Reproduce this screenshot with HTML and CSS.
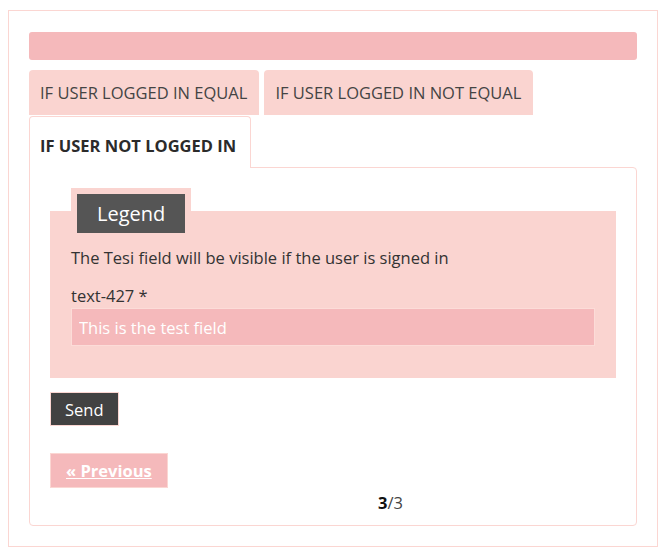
FILE: index.html
```html
<!DOCTYPE html>
<html lang="en">
<head>
    <meta charset="UTF-8">
    <meta name="viewport" content="width=device-width, initial-scale=1.0">
    <title>Multi step form</title>
    <link rel="stylesheet" href="styles.css">
</head>
<body>
    <div class="form-wrap">
        <!-- progress bar -->
        <div class="progress"></div>

        <!-- steps -->
        <ul class="tabs">
            <li class="tab">IF USER LOGGED IN EQUAL</li>
            <li class="tab">IF USER LOGGED IN NOT EQUAL</li>
            <li class="tab active">IF USER NOT LOGGED IN</li>
        </ul>

        <div class="panel">
            <fieldset class="group">
                <legend><span>Legend</span></legend>
                <p>The Tesi field will be visible if the user is signed in</p>
                <label for="text-427">text-427 *</label>
                <input type="text" id="text-427" placeholder="This is the test field">
            </fieldset>

            <button class="send" type="button">Send</button>

            <div class="pager">
                <a href="#" class="prev">&laquo; Previous</a>
            </div>
            <div class="count"><b>3</b>/3</div>
        </div>
    </div>
</body>
</html>
```

FILE: styles.css
```css
body {
    margin: 10px 0 0 8px;
    font-family: "Open Sans", "Noto Sans", sans-serif;
    font-size: 16.5px;
    color: #333;
    background: #fff;
}
.form-wrap {
    width: 650px;
    box-sizing: border-box;
    border: 1px solid #fbd6d2;
    padding: 21px 20px 20px;
}
.progress {
    height: 28px;
    background-color: #f5b9bb;
    border-radius: 3px;
}
/* steps */
.tabs {
    list-style: none;
    margin: 10px 0 0;
    padding: 0;
    display: flex;
    flex-wrap: wrap;
    column-gap: 5px;
    row-gap: 1px;
}
.tab {
    background-color: #fad4d0;
    color: #444;
    padding: 12px 12px 12px 11px;
    line-height: 21px;
    border-radius: 4px 4px 0 0;
}
.tab.active {
    background-color: #fff;
    color: #2b2b2b;
    font-weight: bold;
    border: 1px solid #fbd6d2;
    border-bottom: none;
    padding: 18px 14px 12px 10px;
    margin-bottom: -1px;
    position: relative;
    z-index: 1;
}
.panel {
    border: 1px solid #fbd6d2;
    border-radius: 0 4px 4px 4px;
    padding: 20px 20px 10px;
}
/* fieldset */
.group {
    margin: 0;
    border: none;
    background-color: #fad4d0;
    padding: 0 21px 32px;
    min-width: 0;
}
.group legend {
    background-color: #fad4d0;
    padding: 6px 6px 0;
}
.group legend span {
    display: block;
    background-color: #555;
    color: #fff;
    font-size: 20px;
    line-height: 39px;
    padding: 0 20px;
}
.group p {
    margin: 13px 0 14px;
    line-height: 24px;
}
.group label {
    display: block;
    line-height: 24px;
}
.group input {
    display: block;
    width: 100%;
    box-sizing: border-box;
    height: 38px;
    margin: 0;
    padding: 0 7px;
    border: 1px solid #fcdcd8;
    background-color: #f5b9bb;
    font-family: inherit;
    font-size: 16.5px;
    color: #fff;
    outline: none;
}
.group input::placeholder {
    color: #fff;
}
/* buttons */
.send {
    display: block;
    margin-top: 14px;
    height: 34px;
    padding: 0 14px;
    border: 1px solid #fbd6d2;
    background-color: #424242;
    color: #fff;
    font-family: inherit;
    font-size: 16.5px;
    cursor: pointer;
}
.pager {
    margin-top: 27px;
}
.prev {
    display: inline-block;
    height: 35px;
    line-height: 33px;
    box-sizing: border-box;
    padding: 0 15px;
    border: 1px solid #fbd6d2;
    background-color: #f5b9bb;
    color: #fff;
    font-weight: bold;
    text-decoration: underline;
}
.count {
    margin-left: 115px;
    text-align: center;
    line-height: 24px;
    padding-top: 3px;
    color: #444;
}
.count b {
    color: #111;
}
```
